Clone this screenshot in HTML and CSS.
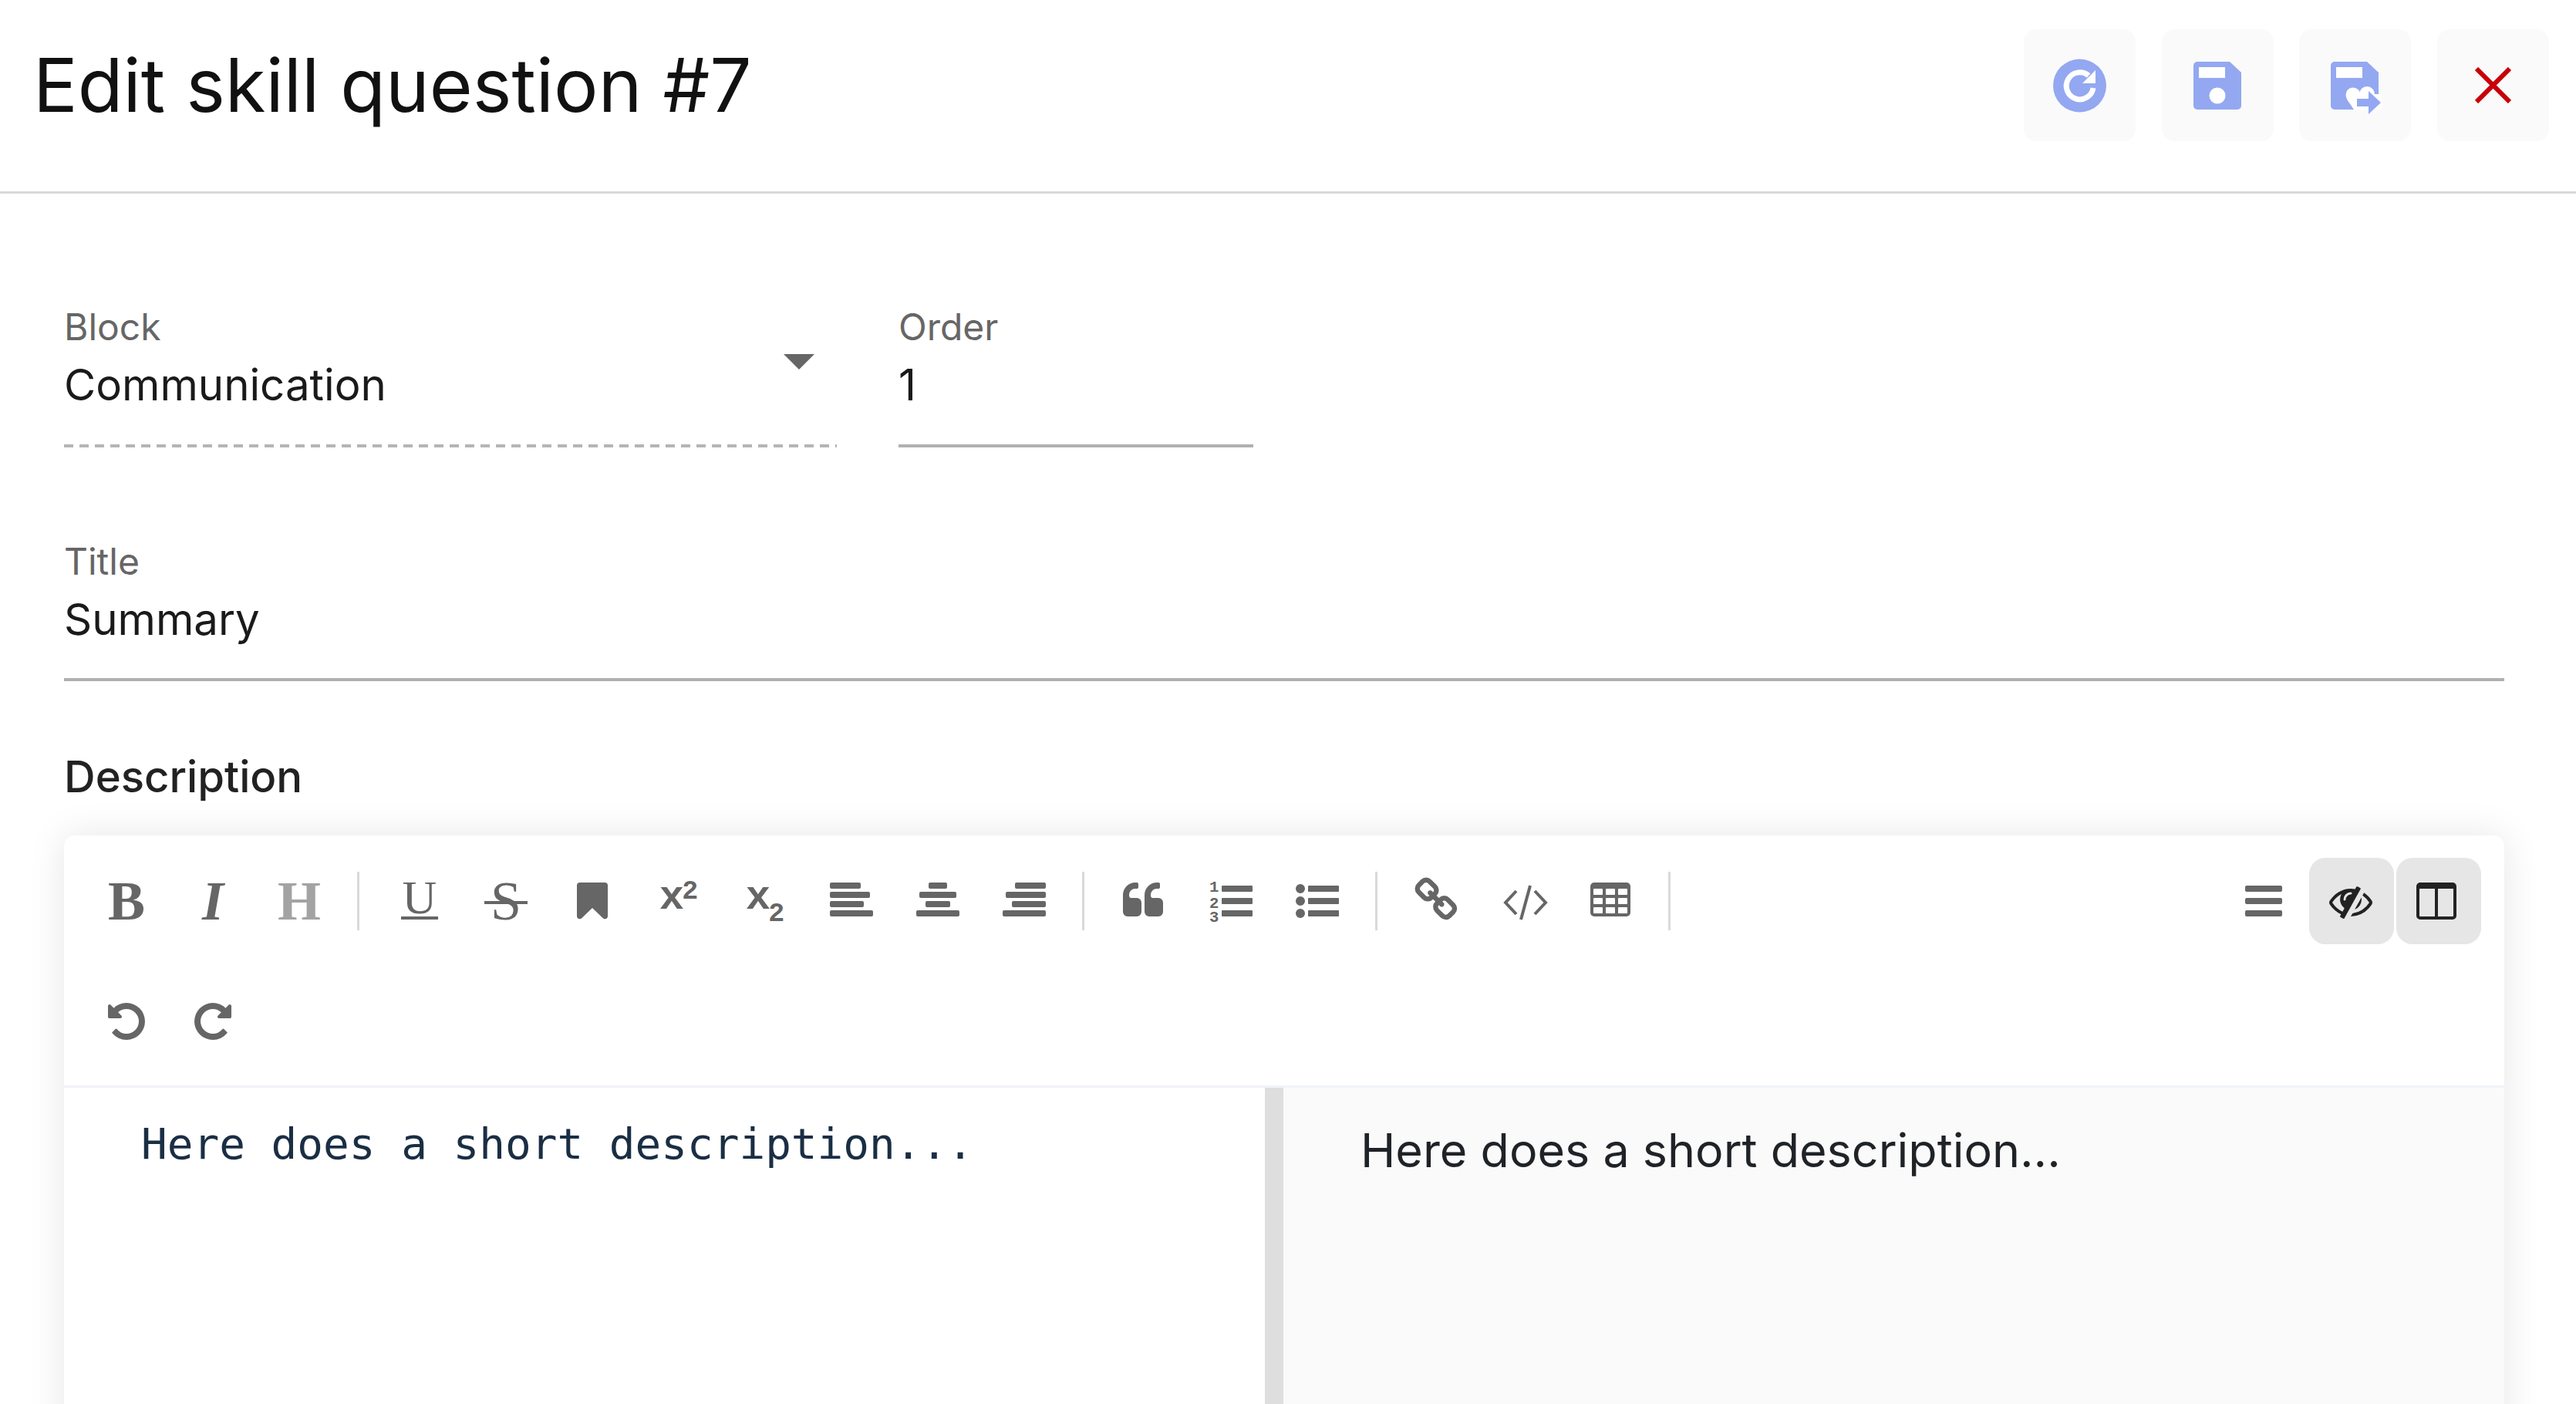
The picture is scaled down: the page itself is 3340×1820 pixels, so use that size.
FILE: index.html
```html
<!DOCTYPE html>
<html lang="en">
<head>
<meta charset="utf-8">
<title>Edit skill question #7</title>
<link rel="stylesheet" href="styles.css">
</head>
<body>
<header class="head">
  <h1 class="head-title">Edit skill question #7</h1>
  <div class="head-actions">
    <button class="act" aria-label="Reset">
      <svg class="act-ico" width="70" height="70" viewBox="0 0 70 70"><circle cx="34.5" cy="35" r="34.5" fill="#93a8f1"/><path d="M52 38a17.5 17.5 0 1 1-6-16" fill="none" stroke="#fff" stroke-width="7"/><path d="M55 15v17H38z" fill="#fff"/></svg>
    </button>
    <button class="act" aria-label="Save">
      <svg class="act-ico" width="62" height="62" viewBox="0 0 62 62"><path d="M5 0h42l15 14v43a5 5 0 0 1-5 5H5a5 5 0 0 1-5-5V5a5 5 0 0 1 5-5z" fill="#93a8f1"/><rect x="7" y="7" width="34" height="14" fill="#fff"/><ellipse cx="31" cy="44" rx="10.5" ry="10.5" fill="#fff"/></svg>
    </button>
    <button class="act" aria-label="Save and continue">
      <svg class="act-ico act-ico-as" width="66" height="68" viewBox="0 0 66 68"><path d="M5 0h42l15 14v43a5 5 0 0 1-5 5H5a5 5 0 0 1-5-5V5a5 5 0 0 1 5-5z" fill="#93a8f1"/><rect x="7" y="7" width="34" height="14" fill="#fff"/><circle cx="29" cy="43" r="9.500" fill="#fff"/><circle cx="47" cy="42" r="10" fill="#fff"/><path d="M21 49L30 62H66V42H30z" fill="#fff"/><path d="M34 48h15V38l16 15-16 15V58H34z" fill="#93a8f1"/></svg>
    </button>
    <button class="act" aria-label="Close">
      <svg class="act-ico" width="47" height="47" viewBox="0 0 47 47"><path d="M2 2l43 43M45 2L2 45" fill="none" stroke="#c8000a" stroke-width="6"/></svg>
    </button>
  </div>
</header>

<main class="form">
  <div class="field-row">
    <div class="field field-block">
      <div class="field-label">Block</div>
      <div class="field-value">Communication</div>
      <span class="caret"></span>
    </div>
    <div class="field field-order">
      <div class="field-label">Order</div>
      <div class="field-value">1</div>
    </div>
  </div>
  <div class="field field-title">
    <div class="field-label">Title</div>
    <div class="field-value">Summary</div>
  </div>
  <div class="desc-label">Description</div>

  <section class="editor">
    <div class="toolbar">
      <div class="tool-row">
        <button class="tool tool-txt tool-b">B</button>
        <button class="tool tool-txt tool-i">I</button>
        <button class="tool tool-txt tool-h">H</button>
        <i class="sep"></i>
        <button class="tool tool-txt tool-u">U</button>
        <button class="tool tool-txt tool-s">S</button>
        <button class="tool"><svg class="ico" viewBox="0 0 1792 1792"><path d="M1420 128q23 0 44 9 33 13 52.5 41t19.5 62v1289q0 34-19.5 62t-52.5 41q-19 8-44 8-48 0-83-32l-441-424-441 424q-36 33-83 33-23 0-44-9-33-13-52.5-41t-19.5-62v-1289q0-34 19.5-62t52.5-41q21-9 44-9h1048z"/></svg></button>
        <button class="tool tool-sc"><span class="sc-x">x</span><span class="sc-d sc-up">2</span></button>
        <button class="tool tool-sc"><span class="sc-x">x</span><span class="sc-d sc-down">2</span></button>
        <button class="tool"><svg class="ico" viewBox="0 0 1792 1792"><rect y="128" width="1280" height="256" rx="64"/><rect y="512" width="1664" height="256" rx="64"/><rect y="896" width="1408" height="256" rx="64"/><rect y="1280" width="1792" height="256" rx="64"/></svg></button>
        <button class="tool"><svg class="ico" viewBox="0 0 1792 1792"><rect x="512" y="128" width="768" height="256" rx="64"/><rect x="128" y="512" width="1536" height="256" rx="64"/><rect x="384" y="896" width="1024" height="256" rx="64"/><rect y="1280" width="1792" height="256" rx="64"/></svg></button>
        <button class="tool"><svg class="ico" viewBox="0 0 1792 1792"><rect x="512" y="128" width="1280" height="256" rx="64"/><rect x="128" y="512" width="1664" height="256" rx="64"/><rect x="384" y="896" width="1408" height="256" rx="64"/><rect y="1280" width="1792" height="256" rx="64"/></svg></button>
        <i class="sep"></i>
        <button class="tool"><svg class="ico" viewBox="0 0 1792 1792"><path d="M768 960v384q0 80-56 136t-136 56h-384q-80 0-136-56t-56-136v-704q0-104 40.5-198.5t109.5-163.5 163.5-109.5 198.5-40.5h64q26 0 45 19t19 45v128q0 26-19 45t-45 19h-64q-106 0-181 75t-75 181v32q0 40 28 68t68 28h224q80 0 136 56t56 136zm896 0v384q0 80-56 136t-136 56h-384q-80 0-136-56t-56-136v-704q0-104 40.5-198.5t109.5-163.5 163.5-109.5 198.5-40.5h64q26 0 45 19t19 45v128q0 26-19 45t-45 19h-64q-106 0-181 75t-75 181v32q0 40 28 68t68 28h224q80 0 136 56t56 136z"/></svg></button>
        <button class="tool"><svg class="ico" viewBox="0 0 1792 1792"><rect x="512" y="256" width="1280" height="256" rx="32"/><rect x="512" y="768" width="1280" height="256" rx="32"/><rect x="512" y="1280" width="1280" height="256" rx="32"/><text class="ol-num" x="0" y="512">1</text><text class="ol-num" x="0" y="1184">2</text><text class="ol-num" x="0" y="1760">3</text></svg></button>
        <button class="tool"><svg class="ico" viewBox="0 0 1792 1792"><path d="M384 1408q0 80-56 136t-136 56-136-56-56-136 56-136 136-56 136 56 56 136zm0-512q0 80-56 136t-136 56-136-56-56-136 56-136 136-56 136 56 56 136zm1408 416v192q0 13-9.5 22.5t-22.5 9.5h-1216q-13 0-22.5-9.5t-9.5-22.5v-192q0-13 9.5-22.5t22.5-9.5h1216q13 0 22.5 9.5t9.5 22.5zm-1408-928q0 80-56 136t-136 56-136-56-56-136 56-136 136-56 136 56 56 136zm1408 416v192q0 13-9.5 22.5t-22.5 9.5h-1216q-13 0-22.5-9.5t-9.5-22.5v-192q0-13 9.5-22.5t22.5-9.5h1216q13 0 22.5 9.5t9.5 22.5zm0-512v192q0 13-9.5 22.5t-22.5 9.5h-1216q-13 0-22.5-9.5t-9.5-22.5v-192q0-13 9.5-22.5t22.5-9.5h1216q13 0 22.5 9.5t9.5 22.5z"/></svg></button>
        <i class="sep"></i>
        <button class="tool"><svg class="ico ico-link" viewBox="0 0 1792 1792"><path d="M1456 1216q0-40-28-68l-208-208q-28-28-68-28-42 0-72 32 3 3 19 18.5t21.5 21.5 15 19 13 25.5 3.5 27.5q0 40-28 68t-68 28q-15 0-27.5-3.5t-25.5-13-19-15-21.5-21.5-18.5-19q-33 31-33 73 0 40 28 68l206 207q27 27 68 27 40 0 68-26l147-146q28-28 28-67zm-703-705q0-40-28-68l-206-207q-28-28-68-28-39 0-68 27l-147 146q-28 28-28 67 0 40 28 68l208 208q27 27 68 27 42 0 72-31-3-3-19-18.5t-21.5-21.5-15-19-13-25.5-3.5-27.5q0-40 28-68t68-28q15 0 27.5 3.5t25.5 13 19 15 21.5 21.5 18.5 19q33-31 33-73zm895 705q0 120-85 203l-147 146q-83 83-203 83-121 0-204-85l-206-207q-83-83-83-203 0-123 88-209l-88-88q-86 88-208 88-120 0-204-84l-208-208q-84-84-84-204t85-203l147-146q83-83 203-83 121 0 204 85l206 207q83 83 83 203 0 123-88 209l88 88q86-88 208-88 120 0 204 84l208 208q84 84 84 204z"/></svg></button>
        <button class="tool"><svg class="ico ico-code" viewBox="0 0 56 56"><path d="M16 15L2 30l14 15M40 15l14 15-14 15M34 8L22 52" fill="none" stroke="#666" stroke-width="4"/></svg></button>
        <button class="tool"><svg class="ico" viewBox="0 0 1792 1792"><path d="M576 1376v-192q0-14-9-23t-23-9h-320q-14 0-23 9t-9 23v192q0 14 9 23t23 9h320q14 0 23-9t9-23zm0-384v-192q0-14-9-23t-23-9h-320q-14 0-23 9t-9 23v192q0 14 9 23t23 9h320q14 0 23-9t9-23zm512 384v-192q0-14-9-23t-23-9h-320q-14 0-23 9t-9 23v192q0 14 9 23t23 9h320q14 0 23-9t9-23zm-512-768v-192q0-14-9-23t-23-9h-320q-14 0-23 9t-9 23v192q0 14 9 23t23 9h320q14 0 23-9t9-23zm512 384v-192q0-14-9-23t-23-9h-320q-14 0-23 9t-9 23v192q0 14 9 23t23 9h320q14 0 23-9t9-23zm512 384v-192q0-14-9-23t-23-9h-320q-14 0-23 9t-9 23v192q0 14 9 23t23 9h320q14 0 23-9t9-23zm-512-768v-192q0-14-9-23t-23-9h-320q-14 0-23 9t-9 23v192q0 14 9 23t23 9h320q14 0 23-9t9-23zm512 384v-192q0-14-9-23t-23-9h-320q-14 0-23 9t-9 23v192q0 14 9 23t23 9h320q14 0 23-9t9-23zm0-384v-192q0-14-9-23t-23-9h-320q-14 0-23 9t-9 23v192q0 14 9 23t23 9h320q14 0 23-9t9-23zm128-320v1088q0 66-47 113t-113 47h-1344q-66 0-113-47t-47-113v-1088q0-66 47-113t113-47h1344q66 0 113 47t47 113z"/></svg></button>
        <i class="sep"></i>
        <span class="tool-gap"></span>
        <button class="tool tool-near"><svg class="ico" viewBox="0 0 1792 1792"><rect x="128" y="256" width="1536" height="256" rx="64"/><rect x="128" y="768" width="1536" height="256" rx="64"/><rect x="128" y="1280" width="1536" height="256" rx="64"/></svg></button>
        <button class="tool tool-on"><svg class="ico ico-eye" viewBox="0 0 1792 1792"><path d="M555 1335l78-141q-87-63-136-159t-49-203q0-121 61-225-229 117-381 353 167 258 427 375zm389-759q0-20-14-34t-34-14q-125 0-214.5 89.5t-89.5 214.5q0 20 14 34t34 14 34-14 14-34q0-86 61-147t147-61q20 0 34-14t14-34zm363-191q0 7-1 9-106 189-316 567t-315 566l-49 89q-10 16-28 16-12 0-134-70-16-10-16-28 0-12 44-87-143-65-263.5-173t-208.5-245q-20-31-20-69t20-69q153-235 380-371t496-136q89 0 180 17l54-97q10-16 28-16 5 0 18 6t31 15.5 33 18.5 31.5 18.5 19.5 11.5q16 10 16 27zm37 447q0 139-79 253.5t-209 164.5l280-502q8 45 8 84zm448 128q0 35-20 69-39 64-109 145-150 172-347.5 267t-419.5 95l74-132q212-18 392.5-137t301.5-307q-115-179-282-294l63-112q95 64 182.5 153t144.5 184q20 34 20 69z"/></svg></button>
        <button class="tool tool-on tool-on-next"><svg class="ico ico-cols" viewBox="0 0 1792 1792"><path d="M224 1536h608v-1152h-640v1120q0 13 9.5 22.5t22.5 9.5zm1376-32v-1120h-640v1152h608q13 0 22.5-9.5t9.5-22.5zm128-1216v1216q0 66-47 113t-113 47h-1344q-66 0-113-47t-47-113v-1216q0-66 47-113t113-47h1344q66 0 113 47t47 113z"/></svg></button>
      </div>
      <div class="tool-row">
        <button class="tool"><svg class="ico" viewBox="0 0 1792 1792"><path d="M1664 896q0 156-61 298t-164 245-245 164-298 61q-172 0-327-72.5t-264-204.5q-7-10-6.5-22.5t8.5-20.5l137-138q10-9 25-9 16 2 23 12 73 95 179 147t225 52q104 0 198.5-40.5t163.5-109.5 109.5-163.5 40.5-198.5-40.5-198.5-109.5-163.5-163.5-109.5-198.5-40.5q-98 0-188 35.5t-160 101.5l137 138q31 30 14 69-17 40-59 40h-448q-26 0-45-19t-19-45v-448q0-42 40-59 39-17 69 14l130 129q107-101 244.5-156.5t284.5-55.5q156 0 298 61t245 164 164 245 61 298z"/></svg></button>
        <button class="tool"><svg class="ico" viewBox="0 0 1792 1792"><path d="M1664 256v448q0 26-19 45t-45 19h-448q-42 0-59-40-17-39 14-69l138-138q-148-137-349-137-104 0-198.5 40.5t-163.5 109.5-109.5 163.5-40.5 198.5 40.5 198.5 109.5 163.5 163.5 109.5 198.5 40.5q119 0 225-52t179-147q7-10 23-12 15 0 25 9l137 138q9 8 9.5 20.5t-7.5 22.5q-109 132-264 204.5t-327 72.5q-156 0-298-61t-245-164-164-245-61-298 61-298 164-245 245-164 298-61q147 0 284.5 55.5t244.5 156.5l130-129q29-31 70-14 39 17 39 59z"/></svg></button>
      </div>
    </div>
    <div class="panes">
      <div class="pane-src">Here does a short description...</div>
      <div class="pane-split"></div>
      <div class="pane-view">Here does a short description...</div>
    </div>
  </section>
</main>
</body>
</html>
```

FILE: styles.css
```css
* { box-sizing: border-box; }
html, body { margin: 0; height: 100%; }
body {
  height: 1820px;
  overflow: hidden;
  background: #fff;
  font-family: Inter, "Liberation Sans", sans-serif;
  color: #111;
}
.head {
  height: 251px;
  padding: 38px 35px 0 43px;
  display: flex;
  justify-content: space-between;
  align-items: flex-start;
  border-bottom: 3px solid #d9d9d9;
}
.head-title {
  margin: 0;
  height: 145px;
  line-height: 145px;
  font-size: 96px;
  font-weight: 400;
  color: #111;
}
.head-actions { display: flex; gap: 33.67px; }
.act {
  width: 145px;
  height: 145px;
  padding: 0;
  border: 0;
  border-radius: 16px;
  background: #fafafa;
  display: flex;
  align-items: center;
  justify-content: center;
}
.act-ico-as { margin-left: 3px; margin-top: 7px; }

.form { padding: 0 93px 0 83px; }
.field-row { display: flex; gap: 80px; padding-top: 144px; }
.field { position: relative; }
.field-block {
  width: 1002px;
  height: 185px;
  background: repeating-linear-gradient(90deg, #b5b5b5 0 12px, transparent 12px 20px) left bottom / 100% 4px no-repeat;
}
.field-order { width: 460px; height: 185px; border-bottom: 4px solid #b0b0b0; }
.field-title { margin-top: 119px; height: 184px; border-bottom: 4px solid #b0b0b0; }
.field-label { font-size: 48px; line-height: 58px; color: #666; }
.field-value { font-size: 56.4px; line-height: 70px; margin-top: 11px; color: #1a1a1a; }
.caret {
  position: absolute;
  right: 29px;
  top: 64px;
  width: 0;
  height: 0;
  border-left: 20px solid transparent;
  border-right: 20px solid transparent;
  border-top: 20px solid #666;
}
.desc-label { margin-top: 90px; font-size: 56.3px; line-height: 68px; font-weight: 500; color: #222; }

.editor {
  margin-top: 42px;
  height: 800px;
  background: #fff;
  border-radius: 14px;
  box-shadow: 0 0 48px rgba(0, 0, 0, 0.1);
  display: flex;
  flex-direction: column;
}
.toolbar { padding: 29px 30px 27px 26px; border-bottom: 3px solid #f0f3fa; display: flex; flex-direction: column; gap: 44px; }
.tool-row { display: flex; align-items: center; gap: 2px; }
.tool {
  width: 110px;
  height: 112px;
  padding: 0;
  border: 0;
  border-radius: 21px;
  background: transparent;
  color: #666;
  fill: #666;
  display: flex;
  align-items: center;
  justify-content: center;
  flex: none;
  position: relative;
}
.tool-near { margin-right: 2px; }
.tool-on { background: #e6e6e6; fill: #222; }
.tool-on-next { margin-left: 1px; }
.ico { width: 56px; height: 56px; display: block; overflow: visible; flex: none; }
.ico-link { width: 60px; height: 60px; margin-top: -3px; }
.ico-code { margin-left: 4px; }
.ico-eye { margin-left: -3px; }
.ico-cols { margin-left: -6px; }
.tool-txt { font-family: "Liberation Serif", serif; font-size: 72px; line-height: 1; }
.tool-b { font-weight: 700; }
.tool-i { font-weight: 700; font-style: italic; }
.tool-h { font-weight: 700; color: #a3a3a3; }
.tool-u { font-size: 62px; padding-bottom: 10px; }
.tool-u::after {
  content: "";
  position: absolute;
  left: 31px;
  top: 76px;
  width: 48px;
  height: 4px;
  background: #666;
}
.tool-s::after {
  content: "";
  position: absolute;
  left: 27px;
  top: 56px;
  width: 56px;
  height: 4px;
  background: #666;
}
.tool-sc { font-family: "Liberation Mono", monospace; font-weight: 700; line-height: 1; }
.sc-x { font-size: 54px; transform: translateY(-4px); }
.sc-d { font-size: 35px; margin-left: -3px; }
.sc-up { transform: translateY(-12px); }
.sc-down { transform: translateY(17px); }
.ol-num { font-family: "Liberation Mono", monospace; font-size: 660px; font-weight: 700; fill: #666; }
.sep { width: 3px; height: 76px; background: #d9d9d9; margin: 0 21.5px 0 17.5px; flex: none; }
.tool-gap { flex: 1; }

.panes { flex: 1; display: flex; min-height: 0; }
.pane-src {
  width: 1557px;
  padding: 38px 0 0 100px;
  font-family: "DejaVu Sans Mono", monospace;
  font-size: 56px;
  line-height: 70px;
  color: #1a2e44;
  white-space: pre;
}
.pane-split { width: 24px; background: #dedede; }
.pane-view {
  flex: 1;
  background: #fafafa;
  padding: 43px 0 0 100px;
  font-size: 61px;
  line-height: 76px;
  color: #1f2328;
  border-radius: 0 0 14px 0;
}
```
